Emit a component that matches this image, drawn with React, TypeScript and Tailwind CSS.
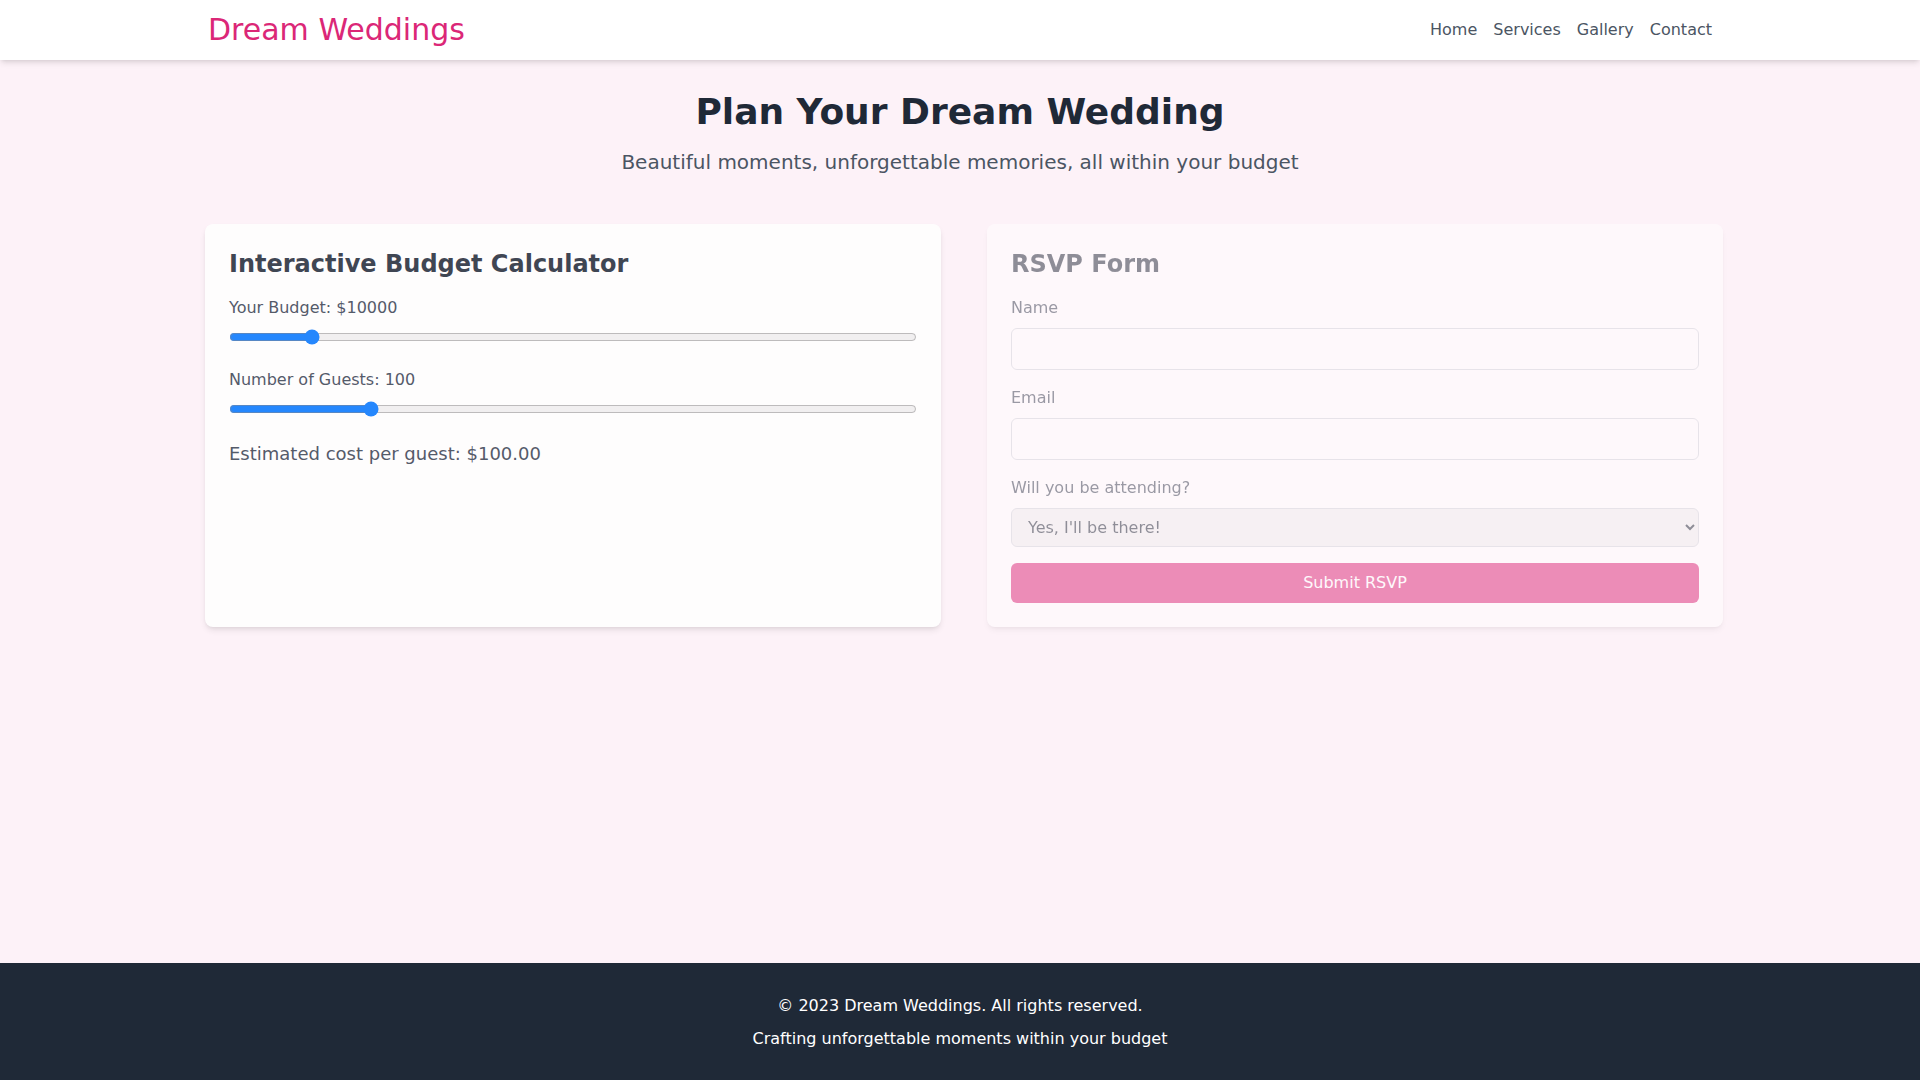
import { useState } from "react";

export default function App() {
  const [budget, setBudget] = useState(10000);
  const [guests, setGuests] = useState(100);
  const [attending, setAttending] = useState("yes");

  return (
    <div className="min-h-screen flex flex-col bg-[#fdf2f8] font-['DejaVu_Sans',sans-serif] text-[#1f2937]">
      <nav className="bg-white shadow-md">
        <div className="max-w-[1536px] mx-auto px-4 py-3 flex items-center justify-between">
          <span className="text-3xl text-[#db2777]">Dream Weddings</span>
          <div className="flex items-center gap-4 text-[#4b5563]">
            <a href="#" className="hover:text-[#db2777]">Home</a>
            <a href="#" className="hover:text-[#db2777]">Services</a>
            <a href="#" className="hover:text-[#db2777]">Gallery</a>
            <a href="#" className="hover:text-[#db2777]">Contact</a>
          </div>
        </div>
      </nav>

      <main className="flex-1 w-full max-w-[1536px] mx-auto px-4 pt-8">
        <div className="text-center mb-12">
          <h1 className="text-4xl font-bold text-[#1f2937] mb-4">Plan Your Dream Wedding</h1>
          <p className="text-xl text-[#4b5563]">
            Beautiful moments, unforgettable memories, all within your budget
          </p>
        </div>

        <div className="grid grid-cols-2 gap-8">
          <div className="bg-white rounded-lg shadow-md p-6 opacity-85 -translate-x-[3px]">
            <h2 className="text-2xl font-bold text-[#1f2937] mb-4">Interactive Budget Calculator</h2>
            <div className="mb-4">
              <label className="block text-[#374151] mb-2">Your Budget: ${budget}</label>
              <input
                type="range"
                min={5000}
                max={50000}
                step={1000}
                value={budget}
                onChange={(e) => setBudget(Number(e.target.value))}
                className="w-full"
              />
            </div>
            <div className="mb-4">
              <label className="block text-[#374151] mb-2">Number of Guests: {guests}</label>
              <input
                type="range"
                min={50}
                max={300}
                value={guests}
                onChange={(e) => setGuests(Number(e.target.value))}
                className="w-full"
              />
            </div>
            <p className="text-lg text-[#374151]">
              Estimated cost per guest: ${(budget / guests).toFixed(2)}
            </p>
          </div>

          <div className="bg-white rounded-lg shadow-md p-6 opacity-50 translate-x-[11px]">
            <h2 className="text-2xl font-bold text-[#1f2937] mb-4">RSVP Form</h2>
            <form className="flex flex-col gap-4" onSubmit={(e) => e.preventDefault()}>
              <div>
                <label className="block text-[#374151] mb-2">Name</label>
                <input type="text" className="w-full px-3 py-2 border border-[#d1d5db] rounded-md" />
              </div>
              <div>
                <label className="block text-[#374151] mb-2">Email</label>
                <input type="email" className="w-full px-3 py-2 border border-[#d1d5db] rounded-md" />
              </div>
              <div>
                <label className="block text-[#374151] mb-2">Will you be attending?</label>
                <select
                  value={attending}
                  onChange={(e) => setAttending(e.target.value)}
                  className="w-full h-[39px] px-3 border border-[#d1d5db] rounded-md bg-[#efefef]"
                >
                  <option value="yes">Yes, I'll be there!</option>
                  <option value="no">Sorry, can't make it</option>
                </select>
              </div>
              <button type="submit" className="w-full bg-[#db2777] text-white py-2 rounded-md">
                Submit RSVP
              </button>
            </form>
          </div>
        </div>
      </main>

      <footer className="bg-[#1f2937] text-white text-center pt-[31px] pb-[29px]">
        <p className="mb-[9px]">© 2023 Dream Weddings. All rights reserved.</p>
        <p>Crafting unforgettable moments within your budget</p>
      </footer>
    </div>
  );
}
